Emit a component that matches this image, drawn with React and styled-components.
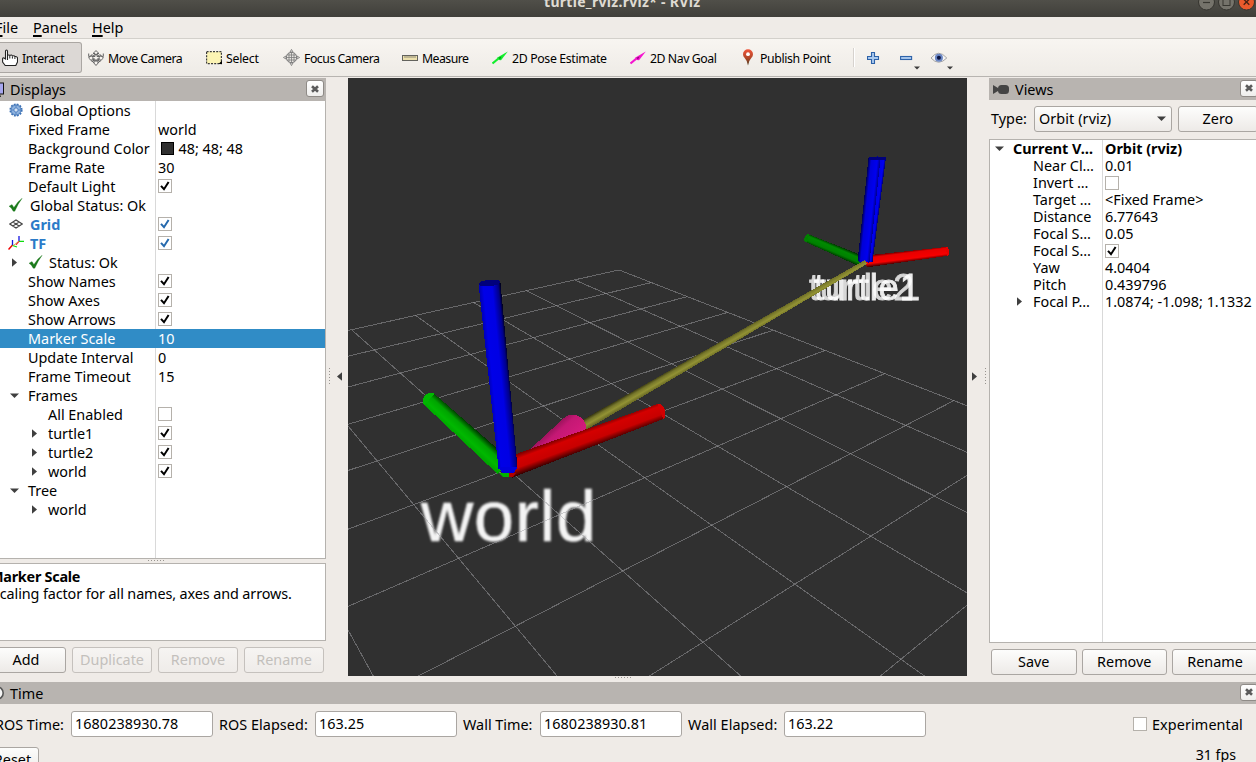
import React from 'react';
import styled, { createGlobalStyle, css } from 'styled-components';

const Global = createGlobalStyle`
  html, body { margin: 0; padding: 0; }
  body { overflow: hidden; background: #efebe7; }
  * { box-sizing: border-box; }
`;

const Window = styled.div`
  width: 1256px;
  height: 762px;
  overflow: hidden;
  display: flex;
  flex-direction: column;
  background: #efebe7;
  color: #000;
  font: 14.4px 'Noto Sans', 'Open Sans', sans-serif;
  white-space: pre;
`;

/* ---------- title bar, menu, toolbar ---------- */

const TitleBar = styled.header`
  height: 17px;
  flex: none;
  display: flex;
  justify-content: flex-end;
  background: linear-gradient(#504f49, #403f3a);
  overflow: hidden;
`;
const TitleText = styled.div`
  width: 158px;
  margin: -8px 496px 0 0;
  line-height: 20px;
  font-size: 14px;
  font-weight: 700;
  letter-spacing: 0.3px;
  color: #dfdbd2;
`;
const WindowButtons = styled.div`
  display: flex;
  gap: 3px;
  width: 58px;
  margin-top: -7px;
`;
const MenuBar = styled.nav`
  height: 22px;
  flex: none;
  display: flex;
  gap: 14px;
  padding-left: 1px;
  border-bottom: 1px solid #d3d0cb;
  line-height: 22px;
`;
const MenuItem = styled.div`
  width: ${(p) => p.$w}px;
  margin-left: ${(p) => p.$shift || 0}px;
  &::first-letter {
    text-decoration: underline;
    text-decoration-thickness: 1.5px;
    text-underline-offset: 2px;
  }
`;
const ToolBar = styled.div`
  height: 38px;
  flex: none;
  display: flex;
  align-items: center;
  background: linear-gradient(#f8f5f1, #eeebe6);
  border-bottom: 1px solid #b7b4b0;
  font-size: 12.3px;
`;
const Tool = styled.div`
  width: ${(p) => p.$w}px;
  height: 31px;
  flex: none;
  display: flex;
  align-items: center;
  gap: 4px;
  letter-spacing: ${(p) => p.$ls}px;
  svg { flex: none; }
  span { padding-top: 2px; }
  ${(p) =>
    p.$active &&
    css`
      margin-right: 6px;
      padding-left: 2px;
      background: #dcd8d5;
      border: 1px solid #aba7a3;
      border-left: 0;
      border-radius: 0 3px 3px 0;
    `}
`;
const Divider = styled.div`
  width: 2px;
  height: 19px;
  margin-right: 12px;
  background: #d6d2ce;
  border-right: 1px solid #fff;
`;
const Action = styled.div`
  width: 33px;
  height: 20px;
  margin-left: ${(p) => p.$shift || 0}px;
  svg { display: block; }
`;

/* ---------- panels ---------- */

const Main = styled.main`
  display: flex;
  flex: none;
  height: 605px;
  padding-top: 1px;
`;
const Displays = styled.section`
  width: 326px;
  display: flex;
  flex-direction: column;
`;
const PanelHeader = styled.div`
  height: ${(p) => p.$h || 22}px;
  flex: none;
  display: flex;
  align-items: center;
  gap: 5px;
  padding-left: ${(p) => p.$pad || 0}px;
  background: #b8b4b0;
  line-height: 22px;
  span { flex: 1; padding-top: 1px; }
`;
const Close = styled.div`
  width: 18px;
  height: 17px;
  margin: 0 ${(p) => p.$right}px 2px 0;
  display: flex;
  align-items: center;
  justify-content: center;
  background: linear-gradient(#fff, #efeeec);
  border: 1px solid #8f8b87;
  border-radius: 3px;
`;
const Tree = styled.div`
  height: ${(p) => p.$h}px;
  flex: none;
  display: flex;
  flex-direction: column;
  border: 1px solid #b5b2ae;
  border-top-width: ${(p) => (p.$framed ? 1 : 0)}px;
  border-left-width: ${(p) => (p.$framed ? 1 : 0)}px;
  border-right-width: ${(p) => (p.$framed ? 0 : 1)}px;
  background: linear-gradient(90deg, #fff ${(p) => p.$split}px, #d9d9d9 ${(p) => p.$split}px, #d9d9d9 ${(p) => p.$split + 1}px, #fff ${(p) => p.$split + 1}px);
`;
const TreeRow = styled.div`
  height: ${(p) => p.$h}px;
  display: flex;
  align-items: center;
  line-height: ${(p) => p.$h}px;
  font-weight: ${(p) => (p.$bold ? 700 : 400)};
  color: ${(p) => (p.$sel ? '#fff' : p.$blue ? '#2b7bc8' : '#000')};
  ${(p) => p.$sel && 'background: #308cc6;'}
`;
const NameCell = styled.div`
  width: ${(p) => p.$w}px;
  height: 100%;
  flex: none;
  display: flex;
  align-items: center;
  padding-left: ${(p) => p.$pad}px;
`;
const IconSlot = styled.span`
  width: ${(p) => p.$w}px;
  flex: none;
  display: flex;
  padding-bottom: ${(p) => p.$lift || 0}px;
`;
const ValueCell = styled.div`
  flex: 1;
  display: flex;
  align-items: center;
`;
const Swatch = styled.i`
  width: 13px;
  height: 13px;
  margin: 0 4.5px 0 3px;
  background: #303030;
  border: 1px solid #000;
`;
const Box = styled.i`
  width: 14px;
  height: 14px;
  flex: none;
  display: flex;
  margin-bottom: ${(p) => p.$lift || 0}px;
  background: #fff;
  border: 1px solid #b5b1ab;
`;
const GripRow = styled.div`
  height: 4px;
  display: flex;
  justify-content: center;
  align-items: flex-start;
  padding: 1px ${(p) => p.$right}px 0 0;
`;
const Description = styled.div`
  height: 78px;
  flex: none;
  padding: 4px 0 0 0;
  background: #fff;
  border: 1px solid #b5b2ae;
  border-left: 0;
  line-height: 17px;
  p { margin: 0 0 0 -8px; letter-spacing: -0.11px; }
  b { display: block; margin-left: -10px; letter-spacing: -0.25px; }
`;
const ButtonRow = styled.div`
  display: flex;
  gap: ${(p) => p.$gap}px;
  margin: ${(p) => p.$top}px 0 0 ${(p) => p.$left}px;
`;
const Button = styled.div`
  width: ${(p) => p.$w}px;
  height: 26px;
  flex: none;
  line-height: 24px;
  text-align: center;
  border: 1px solid #aaa6a2;
  border-radius: 3px;
  background: linear-gradient(#fdfdfc, #edeae7);
  ${(p) =>
    p.$disabled &&
    css`
      color: #c3c0bc;
      border-color: #c5c1bd;
      background: linear-gradient(#f6f4f2, #efece9);
    `}
`;
const Handle = styled.div`
  width: 22px;
  flex: none;
  display: flex;
  align-items: center;
  gap: ${(p) => p.$gap}px;
  padding: 0 3px 7px;
`;
const Viewport = styled.div`
  width: 619px;
  height: 598px;
  flex: none;
  background: #303030;
  svg { display: block; }
`;
const ViewColumn = styled.div`
  width: 619px;
  flex: none;
`;
const Views = styled.section`
  width: 267px;
  display: flex;
  flex-direction: column;
`;
const TypeRow = styled.div`
  height: 39px;
  flex: none;
  display: flex;
  align-items: center;
  padding: 0 0 2px 2px;
`;
const Select = styled.div`
  width: 138px;
  height: 26px;
  flex: none;
  margin: 0 6px 0 7px;
  display: flex;
  align-items: center;
  justify-content: space-between;
  padding: 0 5px 0 4px;
  border: 1px solid #aaa6a2;
  border-radius: 3px;
  letter-spacing: 0.1px;
  background: linear-gradient(#fdfdfc, #edeae7);
`;
const TimePanel = styled.section`
  display: flex;
  flex-direction: column;
`;
const TimeRow = styled.div`
  display: flex;
  align-items: center;
  height: 26px;
  margin: 7px 0 10px -5px;
`;
const TimeLabel = styled.span`
  width: ${(p) => p.$w}px;
  flex: none;
  letter-spacing: ${(p) => p.$ls || 0}px;
`;
const Field = styled.div`
  width: 142px;
  height: 26px;
  flex: none;
  margin-right: 6px;
  padding-left: 3px;
  line-height: 24px;
  letter-spacing: 0.05px;
  background: #fff;
  border: 1px solid #aaa6a2;
  border-radius: 3px;
`;
const Experimental = styled.div`
  display: flex;
  align-items: center;
  gap: 5px;
  margin-left: 201px;
  letter-spacing: 0.1px;
`;
const Footer = styled.div`
  display: flex;
  justify-content: space-between;
  padding-right: 20px;
`;
const Fps = styled.span`
  font-size: 14.2px;
  margin-top: -2px;
`;

/* ---------- small drawings ---------- */

const Arrow = ({ dir, size = 9 }) => {
  const d = { down: 'M0 2.5h9l-4.5 4.5z', right: 'M2 .2v8.6l5-4.3z', left: 'M7 .2v8.6l-5-4.3z' }[dir];
  return (
    <svg width={size} height={size} viewBox="0 0 9 9">
      <path d={d} fill="#3f3f3f" />
    </svg>
  );
};
const Check = ({ on, blue, lift }) => (
  <Box $lift={lift}>
    {on && (
      <svg width="12" height="12" viewBox="0 0 12 12">
        <path d="M2 5.8 5 9.2 9.6 2" fill="none" stroke={blue ? '#2569ad' : '#000'} strokeWidth="2" />
      </svg>
    )}
  </Box>
);
const Cross = () => (
  <svg width="10" height="10" viewBox="0 0 10 10">
    <path d="M2 2.2 8 7.8M8 2.2 2 7.8" stroke="#5b5b5b" strokeWidth="2.6" />
  </svg>
);
const Dots = ({ vertical }) => (
  <svg width={vertical ? 1 : 17} height={vertical ? 17 : 1}>
    {[0, 3, 6, 9, 12, 15].map((n) => (
      <rect key={n} x={vertical ? 0 : n} y={vertical ? n : 0} width="1" height="1" fill="#98948f" />
    ))}
  </svg>
);
const Tick = () => (
  <svg width="14" height="14" viewBox="0 0 14 14">
    <path d="M0 8.200l3-1.600 1.900 2.900Q8.300 3.500 13.200.2 8.800 6 5.800 13.200H4.200Q3 9.800 0 8.200z" fill="#1b7a1b" stroke="#1b7a1b" strokeWidth=".3" />
  </svg>
);
const Gear = () => (
  <svg width="14" height="14" viewBox="0 0 14 14">
    <circle cx="7" cy="7" r="5.8" fill="none" stroke="#3b70b4" strokeWidth="1.6" strokeDasharray="1.9 1.14" />
    <circle cx="7" cy="7" r="5" fill="#8fb3df" stroke="#4579bb" />
    <circle cx="7" cy="7" r="2.1" fill="#d6e3f3" stroke="#4579bb" strokeWidth=".8" />
    <path d="M7 2.500v2.300M7 9.200v2.300M2.500 7h2.300M9.200 7h2.300" stroke="#4579bb" strokeWidth=".8" />
  </svg>
);
const GridIcon = () => (
  <svg width="14" height="10" viewBox="0 0 14 10">
    <path d="M.8 5 7 1l6.200 4L7 9zM3.900 3l6.200 4M10.100 3 3.900 7" fill="none" stroke="#454545" strokeWidth="1.1" />
  </svg>
);
const TfIcon = () => (
  <svg width="17" height="16" viewBox="0 0 17 16">
    <path d="M5 9.500.5 14.500" stroke="#f00000" strokeWidth="1.500" />
    <path d="M4.500 10V5M11 6V1" stroke="#1515e0" strokeWidth="1.300" />
    <path d="M4.500 10.500l4.500 1.500M11 6.300h5" stroke="#0edc0e" strokeWidth="1.300" />
    <path d="M10.500 6.500 5.500 10.500" stroke="#b8a020" strokeWidth=".9" />
    <path d="M11 6.300 8 9.800" stroke="#f03030" strokeWidth="1.200" />
  </svg>
);
const Hand = () => (
  <svg width="16" height="18" viewBox="0 0 16 18">
    <path
      d="M5.500 11V2.300q0-1.300-1-1.300t-1 1.300V10L2 9q-1.400-.4-1.400.8V13l2.600 3.500h10.600l1.700-3.500V8.800q-.6-1.700-2.600-1.200-.5-1.400-2.500-.6-.6-1.600-2.600-.6-.6-.8-2.300-.2"
      fill="#fff"
      stroke="#222"
      strokeWidth="1.100"
    />
    <path d="M7.800 7v2.500M10.400 7.600v2M12.900 8.200v1.800" stroke="#222" strokeWidth="1" />
  </svg>
);
const MoveIcon = () => (
  <svg width="16" height="16" viewBox="0 0 16 16">
    <g fill="#f6f3ef" stroke="#666" strokeWidth="1" strokeLinejoin="round">
      <path d="M8 .6 5 3.500h2v3H4V4.500L.6 8 4 11.300V9h3v3H5l3 3.500L11 12H9V9h3v2.300L15.400 8 12 4.500v2H9v-3h2z" />
      <path d="M.7 3.500v3L4 6M15.300 3.500v3L12 6M4 12l2-2M12 12l-2-2" fill="none" />
      <circle cx="8" cy="7.600" r="3.200" fill="none" />
    </g>
  </svg>
);
const SelectIcon = () => (
  <svg width="16" height="14" viewBox="0 0 16 14">
    <rect x=".6" y=".6" width="14.800" height="12" fill="#fcf4b4" stroke="#3c3c3c" strokeWidth="1.200" strokeDasharray="2 1.200" />
    <path d="M16 9.500V13h-3.500z" fill="#000" />
  </svg>
);
const FocusIcon = () => (
  <svg width="17" height="17" viewBox="0 0 17 17">
    <g fill="none" stroke="#7c7c7c">
      <circle cx="8.500" cy="8.500" r="5.300" fill="#e7e4e0" />
      <path d="M8.500 3v11M3 8.500h11M6 4v9M11 4v9M4 6h9M4 11h9" strokeWidth=".8" />
    </g>
    <path d="M8.500.4 10 3H7zM8.500 16.600 10 14H7zM.4 8.500 3 7v3zM16.600 8.500 14 7v3z" fill="#f0ede9" stroke="#777" strokeWidth=".8" />
  </svg>
);
const Ruler = () => (
  <svg width="16" height="6" viewBox="0 0 16 6">
    <rect x=".5" y=".5" width="15" height="5" fill="#ece0ac" stroke="#63635e" />
    <path d="M3 1v2M5 1v2M7 1v2M9 1v2M11 1v2M13 1v2" stroke="#77736a" strokeWidth=".8" />
  </svg>
);
const Pointer = ({ color, dark }) => (
  <svg width="16" height="14" viewBox="0 0 16 14">
    <path d="M.5 12.500 6.500 7.500" stroke={color} strokeWidth="2.200" />
    <path d="M5 6.800 15.800.5 9 9.200 7 9z" fill={color} />
    <path d="M6.500 6.800 9.500 5.500 8 8.600z" fill={dark} />
  </svg>
);
const Pin = () => (
  <svg width="16" height="17" viewBox="0 0 16 17">
    <defs>
      <linearGradient id="pin" x2="0" y2="1">
        <stop offset="0" stopColor="#f0553a" />
        <stop offset=".55" stopColor="#b04728" />
        <stop offset="1" stopColor="#453a1c" />
      </linearGradient>
    </defs>
    <path d="M8 16.500Q7.500 12 4.500 8.800A5 5 0 1 1 11.500 8.800Q8.500 12 8 16.500z" fill="url(#pin)" />
    <circle cx="8" cy="5.200" r="1.900" fill="#fff" />
  </svg>
);
const Plus = () => (
  <svg width="20" height="20" viewBox="0 0 20 20">
    <path d="M4.500.5h3v4h4v3h-4v4h-3v-4h-4v-3h4z" transform="translate(0 4)" fill="#a9c9ee" stroke="#2d62a8" strokeWidth="1.100" />
  </svg>
);
const Minus = () => (
  <svg width="20" height="22" viewBox="0 0 20 22">
    <rect x=".6" y="8.500" width="11" height="3" fill="#a9c9ee" stroke="#2d62a8" strokeWidth="1.100" />
    <path d="M14 18.500h6l-3 3z" fill="#3c3c3c" />
  </svg>
);
const Eye = () => (
  <svg width="22" height="22" viewBox="-1 0 22 22">
    <path d="M-1 10Q6.500.500 14.800 10 6.500 18.500-1 10z" fill="#f4f4f4" stroke="#a4a4a4" strokeWidth="1" />
    <circle cx="6.900" cy="9.700" r="4" fill="#6b87c4" />
    <circle cx="6.900" cy="9.700" r="2" fill="#0b1440" />
    <path d="M15 18.500h6l-3 3z" fill="#3c3c3c" />
  </svg>
);
const Camera = () => (
  <svg width="17" height="9" viewBox="0 0 17 9">
    <path d="M0 0l5 3V6L0 9z" fill="#444" />
    <rect x="5" y="0" width="11" height="9" rx="3.500" fill="#444" />
  </svg>
);
const Monitor = () => (
  <svg width="5" height="16" viewBox="0 0 5 16">
    <rect x="-8" y="1" width="11.500" height="11" fill="#a7a7ef" stroke="#111" />
    <rect x="-4" y="13.500" width="5" height="1.500" fill="#333" />
  </svg>
);
const Clock = () => (
  <svg width="5" height="16" viewBox="0 0 5 16">
    <circle cx="-3" cy="8" r="6.200" fill="#f5f5f5" stroke="#555" strokeWidth="1.600" />
  </svg>
);
const Round = ({ close, square }) => (
  <svg width="17" height="18" viewBox="0 0 17 18">
    <circle cx="8.500" cy="9" r="8" fill={close ? '#ea5a2c' : '#75736b'} stroke="#35342f" />
    {close ? (
      <path d="M5.700 6.200l5.600 5.600M11.300 6.200l-5.600 5.600" stroke="#4a2213" strokeWidth="1.400" />
    ) : square ? (
      <rect x="5" y="5.500" width="7" height="7" fill="none" stroke="#383731" />
    ) : (
      <path d="M5 9.500h7" stroke="#383731" strokeWidth="1.200" />
    )}
  </svg>
);

/* ---------- 3D scene ---------- */

const VIEW_W = 619;
const VIEW_H = 598;
const ORBIT = { focal: [1.0874, -1.098, 1.1332], distance: 6.77643, yaw: 4.0404, pitch: 0.439796 };
const FOCAL_LENGTH = VIEW_H / 2 / Math.tan(Math.PI / 8);

const dot = (a, b) => a[0] * b[0] + a[1] * b[1] + a[2] * b[2];
const cy = Math.cos(ORBIT.yaw);
const sy = Math.sin(ORBIT.yaw);
const cp = Math.cos(ORBIT.pitch);
const sp = Math.sin(ORBIT.pitch);
const eye = [
  ORBIT.focal[0] + ORBIT.distance * cy * cp,
  ORBIT.focal[1] + ORBIT.distance * sy * cp,
  ORBIT.focal[2] + ORBIT.distance * sp,
];
const forward = [-cy * cp, -sy * cp, -sp];
const right = [-sy, cy, 0];
const up = [-cy * sp, -sy * sp, cp];

const toCamera = (p) => {
  const v = p.map((c, i) => c - eye[i]);
  return [dot(v, right), dot(v, up), dot(v, forward)];
};
const toScreen = ([x, y, z]) => [VIEW_W / 2 + (x / z) * FOCAL_LENGTH, VIEW_H / 2 - (y / z) * FOCAL_LENGTH];
const NEAR = 0.4;
const segment = (a, b) => {
  let p = toCamera(a);
  let q = toCamera(b);
  if (p[2] < NEAR && q[2] < NEAR) return null;
  if (p[2] < NEAR) [p, q] = [q, p];
  if (q[2] < NEAR) {
    const t = (p[2] - NEAR) / (p[2] - q[2]);
    q = p.map((c, i) => c + (q[i] - c) * t);
  }
  return [...toScreen(p), ...toScreen(q)];
};
const gridLines = [];
for (let i = -5; i <= 5; i += 1) {
  gridLines.push(segment([i, -5, 0], [i, 5, 0]), segment([-5, i, 0], [5, i, 0]));
}

const Tube = ({ id, from, to, w1, w2, stops, cap }) => {
  const dx = to[0] - from[0];
  const dy = to[1] - from[1];
  const len = Math.hypot(dx, dy);
  const nx = -dy / len;
  const ny = dx / len;
  const a = w1 / 2;
  const b = w2 / 2;
  const pts = [
    [from[0] - nx * a, from[1] - ny * a],
    [to[0] - nx * b, to[1] - ny * b],
    [to[0] + nx * b, to[1] + ny * b],
    [from[0] + nx * a, from[1] + ny * a],
  ];
  const w = Math.max(a, b);
  const mx = (from[0] + to[0]) / 2;
  const my = (from[1] + to[1]) / 2;
  const angle = (Math.atan2(dy, dx) * 180) / Math.PI;
  return (
    <g shapeRendering="crispEdges">
      <linearGradient
        id={id}
        gradientUnits="userSpaceOnUse"
        x1={mx - nx * w}
        y1={my - ny * w}
        x2={mx + nx * w}
        y2={my + ny * w}
      >
        {stops.map(([o, c]) => (
          <stop key={o} offset={o} stopColor={c} />
        ))}
      </linearGradient>
      {cap && !cap[1] && <ellipse cx={to[0]} cy={to[1]} rx={cap[0]} ry={b} transform={`rotate(${angle} ${to[0]} ${to[1]})`} fill={stops[1][1]} />}
      <polygon points={pts.map((p) => p.join(',')).join(' ')} fill={`url(#${id})`} />
      {cap && cap[1] && <ellipse cx={to[0]} cy={to[1]} rx={cap[0]} ry={b} transform={`rotate(${angle} ${to[0]} ${to[1]})`} fill={cap[1]} />}
    </g>
  );
};

const Scene = () => (
  <svg width={VIEW_W} height={VIEW_H} viewBox={`0 0 ${VIEW_W} ${VIEW_H}`}>
    <defs>
      <filter id="soft">
        <feGaussianBlur stdDeviation="0.9" />
      </filter>
      <filter id="softSmall">
        <feGaussianBlur stdDeviation="0.5" />
      </filter>
      <linearGradient id="cone" gradientUnits="userSpaceOnUse" x1="200" y1="350" x2="216" y2="368">
        <stop offset="0" stopColor="#8a1152" />
        <stop offset=".4" stopColor="#c41874" />
        <stop offset="1" stopColor="#d41b7c" />
      </linearGradient>
    </defs>
    <text x="73" y="463" fontFamily="'Liberation Sans', Arial, sans-serif" fontSize="72.500" letterSpacing=".5" fill="#f4f4f4" stroke="#f4f4f4" strokeWidth=".4" filter="url(#soft)">world</text>
    <g stroke="#a0a0a4" strokeOpacity=".5" strokeWidth="1" shapeRendering="crispEdges">
      {gridLines.map((l, i) => l && <line key={i} x1={l[0]} y1={l[1]} x2={l[2]} y2={l[3]} />)}
    </g>

    <Tube id="t-green" from={[513, 183]} to={[460, 160.500]} w1={11} w2={8.500} cap={[3.500]} stops={[[0, '#003000'], [0.3, '#008000'], [0.7, '#008a00'], [1, '#002800']]} />
    <Tube id="t-red" from={[518, 183.500]} to={[598.500, 173.500]} w1={12} w2={9} cap={[2.800]} stops={[[0, '#500000'], [0.22, '#e80000'], [0.7, '#f60000'], [1, '#300000']]} />
    <Tube id="t-blue2" from={[520, 184]} to={[533.500, 79]} w1={9} w2={9} stops={[[0, '#000090'], [0.3, '#0000e0'], [0.8, '#0000f0'], [1, '#000070']]} />
    <Tube id="t-blue1" from={[515.500, 184]} to={[526.500, 80]} w1={12} w2={12} stops={[[0, '#000050'], [0.25, '#0000d8'], [0.75, '#0000f0'], [1, '#000090']]} />
    <path d="M522 79h16v3h-16z" fill="#00007c" />

    <g fontFamily="'Liberation Sans', Arial, sans-serif" fontSize="36.500" fill="#fff" stroke="#fff" strokeWidth=".8" filter="url(#softSmall)">
      <text x="461" y="221.500" letterSpacing=".5" opacity=".8">turtle2</text>
      <text x="466" y="221.500" letterSpacing=".75" opacity=".9">turtle1</text>
    </g>

    <Tube id="shaft" from={[236, 347]} to={[518, 184]} w1={10.500} w2={4.500} stops={[[0, '#303012'], [0.3, '#76762a'], [0.6, '#929234'], [1, '#626222']]} />
    <path d="M179 374 216 340Q221 335.500 229 337.500T238.500 350L228 358 180 376z" fill="url(#cone)" shapeRendering="crispEdges" />
    <Tube id="w-green" from={[156, 389]} to={[81.500, 321.500]} w1={19} w2={15} cap={[6]} stops={[[0, '#00a000'], [0.3, '#00b800'], [0.65, '#00a400'], [1, '#002800']]} />
    <Tube id="w-red" from={[160, 390]} to={[312.500, 333.500]} w1={21} w2={16} cap={[4.500]} stops={[[0, '#700000'], [0.25, '#d40000'], [0.65, '#c80000'], [1, '#300000']]} />
    <path d="M151 395h10v4h-6z" fill="#00b400" />
    <path d="M161 395h7l-3 4h-4z" fill="#b00000" />
    <Tube id="w-blue" from={[160, 390]} to={[141.500, 205]} w1={19} w2={22} cap={[3.300, '#00007c']} stops={[[0, '#0000b0'], [0.2, '#0000e8'], [0.6, '#0000e4'], [0.88, '#000088'], [1, '#000018']]} />
    <path d="M150.500 389h19l-3.500 6h-12z" fill="#0000dc" shapeRendering="crispEdges" />
  </svg>
);

/* ---------- data ---------- */

const displays = [
  { name: 'Global Options', pad: 9, icon: <Gear />, lift: 2 },
  { name: 'Fixed Frame', pad: 28, value: 'world' },
  { name: 'Background Color', pad: 28, value: '48; 48; 48', swatch: true },
  { name: 'Frame Rate', pad: 28, value: '30' },
  { name: 'Default Light', pad: 28, check: true },
  { name: 'Global Status: Ok', pad: 9, icon: <Tick />, lift: 2 },
  { name: 'Grid', pad: 9, icon: <GridIcon />, lift: 2, check: true, blue: true },
  { name: 'TF', pad: 8, icon: <TfIcon />, slot: 22, lift: 1, check: true, blue: true },
  { name: 'Status: Ok', pad: 10, arrow: 'right', icon: <Tick />, slot: 20, lift: 2 },
  { name: 'Show Names', pad: 28, check: true },
  { name: 'Show Axes', pad: 28, check: true },
  { name: 'Show Arrows', pad: 28, check: true },
  { name: 'Marker Scale', pad: 28, value: '10', selected: true },
  { name: 'Update Interval', pad: 28, value: '0' },
  { name: 'Frame Timeout', pad: 28, value: '15' },
  { name: 'Frames', pad: 10, arrow: 'down', slot: 18 },
  { name: 'All Enabled', pad: 48, check: false },
  { name: 'turtle1', pad: 30, arrow: 'right', slot: 18, check: true },
  { name: 'turtle2', pad: 30, arrow: 'right', slot: 18, check: true },
  { name: 'world', pad: 30, arrow: 'right', slot: 18, check: true },
  { name: 'Tree', pad: 10, arrow: 'down', slot: 18 },
  { name: 'world', pad: 30, arrow: 'right', slot: 18 },
];

const views = [
  { name: 'Current V…', pad: 5, arrow: 'down', slot: 18, value: 'Orbit (rviz)', bold: true },
  { name: 'Near Cl…', pad: 43, value: '0.01' },
  { name: 'Invert …', pad: 43, check: false },
  { name: 'Target …', pad: 43, value: '<Fixed Frame>' },
  { name: 'Distance', pad: 43, value: '6.77643' },
  { name: 'Focal S…', pad: 43, value: '0.05' },
  { name: 'Focal S…', pad: 43, check: true },
  { name: 'Yaw', pad: 43, value: '4.0404' },
  { name: 'Pitch', pad: 43, value: '0.439796' },
  { name: 'Focal P…', pad: 25, arrow: 'right', slot: 18, value: '1.0874; -1.098; 1.1332' },
];

const tools = [
  { name: 'Move Camera', w: 118, ls: -0.48, icon: <MoveIcon /> },
  { name: 'Select', w: 77, ls: -0.25, icon: <SelectIcon /> },
  { name: 'Focus Camera', w: 119, ls: -0.48, icon: <FocusIcon /> },
  { name: 'Measure', w: 90, ls: -0.55, icon: <Ruler /> },
  { name: '2D Pose Estimate', w: 138, ls: -0.35, icon: <Pointer color="#12ef2c" dark="#0a8f1c" /> },
  { name: '2D Nav Goal', w: 110, ls: -0.45, icon: <Pointer color="#f514cf" dark="#8c0a78" /> },
  { name: 'Publish Point', w: 113, ls: -0.4, icon: <Pin /> },
];

const times = [
  { label: 'ROS Time:', w: 76, value: '1680238930.78' },
  { label: 'ROS Elapsed:', w: 96, ls: 0.05, value: '163.25' },
  { label: 'Wall Time:', w: 77, value: '1680238930.81' },
  { label: 'Wall Elapsed:', w: 96, ls: 0.05, value: '163.22' },
];

const Rows = ({ items, height, nameWidth, checkLift }) =>
  items.map((r, i) => (
    <TreeRow key={i} $h={height} $sel={r.selected} $blue={r.blue} $bold={r.blue || r.bold}>
      <NameCell $w={nameWidth} $pad={r.pad}>
        {r.arrow && (
          <IconSlot $w={r.icon ? 19 : r.slot}>
            <Arrow dir={r.arrow} />
          </IconSlot>
        )}
        {r.icon && <IconSlot $w={r.slot || 21} $lift={r.lift}>{r.icon}</IconSlot>}
        {r.name}
      </NameCell>
      <ValueCell>
        {r.check !== undefined && <Check on={r.check} blue={r.blue} lift={checkLift} />}
        {r.swatch && <Swatch />}
        {r.value}
      </ValueCell>
    </TreeRow>
  ));

export default function App() {
  return (
    <>
      <Global />
      <Window>
        <TitleBar>
          <TitleText>turtle_rviz.rviz* - RViz</TitleText>
          <WindowButtons>
            <Round />
            <Round square />
            <Round close />
          </WindowButtons>
        </TitleBar>
        <MenuBar>
          <MenuItem $w={24} $shift={-6}>File</MenuItem>
          <MenuItem $w={45}>Panels</MenuItem>
          <MenuItem $w={34}>Help</MenuItem>
        </MenuBar>
        <ToolBar>
          <Tool $w={82} $active $ls={-0.35}>
            <Hand />
            <span>Interact</span>
          </Tool>
          {tools.map((t) => (
            <Tool key={t.name} $w={t.w} $ls={t.ls}>
              {t.icon}
              <span>{t.name}</span>
            </Tool>
          ))}
          <Divider />
          <Action><Plus /></Action>
          <Action><Minus /></Action>
          <Action $shift={-2}><Eye /></Action>
        </ToolBar>

        <Main>
          <Displays>
            <PanelHeader $h={23}>
              <Monitor />
              <span>Displays</span>
              <Close $right={2}><Cross /></Close>
            </PanelHeader>
            <Tree $h={458} $split={155}>
              <Rows items={displays} height={19} nameWidth={158} checkLift={1} />
            </Tree>
            <GripRow $right={14}><Dots /></GripRow>
            <Description>
              <b>Marker Scale</b>
              <p>Scaling factor for all names, axes and arrows.</p>
            </Description>
            <ButtonRow $gap={6} $left={-14} $top={6}>
              <Button $w={80}>Add</Button>
              <Button $w={80} $disabled>Duplicate</Button>
              <Button $w={80} $disabled>Remove</Button>
              <Button $w={80} $disabled>Rename</Button>
            </ButtonRow>
          </Displays>
          <Handle $gap={5}>
            <Dots vertical />
            <Arrow dir="left" />
          </Handle>
          <ViewColumn>
            <Viewport><Scene /></Viewport>
            <GripRow $right={69}><Dots /></GripRow>
          </ViewColumn>
          <Handle $gap={6}>
            <Arrow dir="right" />
            <Dots vertical />
          </Handle>
          <Views>
            <PanelHeader $pad={4}>
              <Camera />
              <span>Views</span>
              <Close $right={-2}><Cross /></Close>
            </PanelHeader>
            <TypeRow>
              Type:
              <Select>
                Orbit (rviz)
                <Arrow dir="down" />
              </Select>
              <Button $w={80}>Zero</Button>
            </TypeRow>
            <Tree $h={504} $split={112} $framed>
              <Rows items={views} height={17} nameWidth={115} />
            </Tree>
            <ButtonRow $gap={5} $left={2} $top={6}>
              <Button $w={85.5}>Save</Button>
              <Button $w={85.5}>Remove</Button>
              <Button $w={86}>Rename</Button>
            </ButtonRow>
          </Views>
        </Main>

        <TimePanel>
          <PanelHeader>
            <Clock />
            <span>Time</span>
            <Close $right={-2}><Cross /></Close>
          </PanelHeader>
          <TimeRow>
            {times.map((t) => (
              <React.Fragment key={t.label}>
                <TimeLabel $w={t.w} $ls={t.ls}>{t.label}</TimeLabel>
                <Field>{t.value}</Field>
              </React.Fragment>
            ))}
            <Experimental>
              <Box $lift={1} />
              Experimental
            </Experimental>
          </TimeRow>
          <Footer>
            <ButtonRow $gap={0} $left={-14} $top={0}>
              <Button $w={53}>Reset</Button>
            </ButtonRow>
            <Fps>31 fps</Fps>
          </Footer>
        </TimePanel>
      </Window>
    </>
  );
}
